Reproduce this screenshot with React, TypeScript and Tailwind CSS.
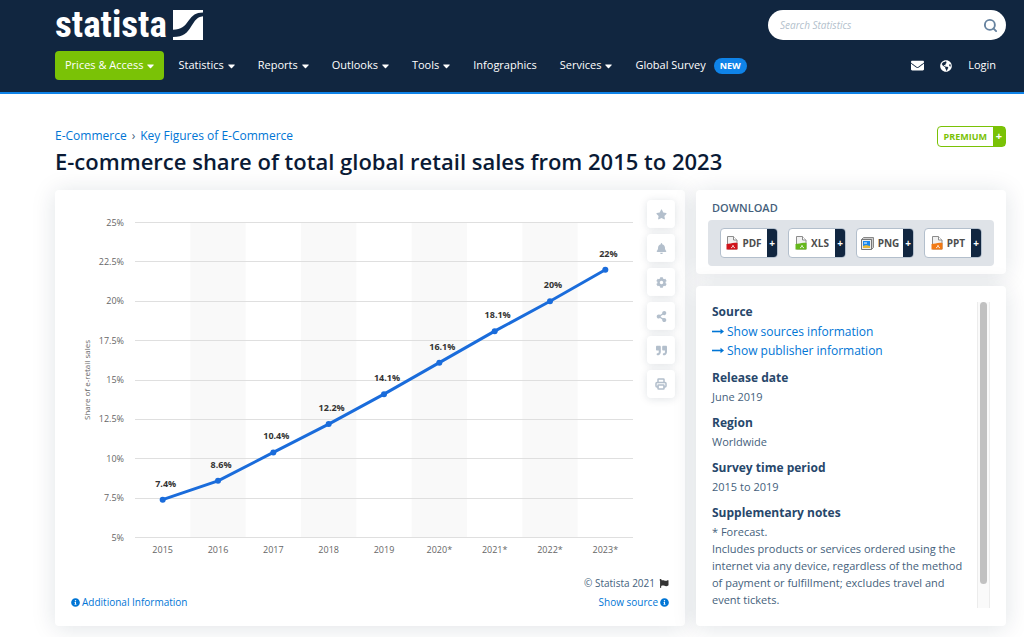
import React from 'react';
import {
  FaBell,
  FaCaretDown,
  FaCog,
  FaEnvelope,
  FaFlag,
  FaGlobeAmericas,
  FaInfoCircle,
  FaQuoteRight,
  FaShareAlt,
  FaStar,
} from 'react-icons/fa';
import { Printer, Search } from 'lucide-react';

const navItems = [
  { label: 'Statistics', caret: true },
  { label: 'Reports', caret: true },
  { label: 'Outlooks', caret: true },
  { label: 'Tools', caret: true },
  { label: 'Infographics', caret: false },
  { label: 'Services', caret: true },
];

const points = [
  { year: '2015', value: 7.4 },
  { year: '2016', value: 8.6 },
  { year: '2017', value: 10.4 },
  { year: '2018', value: 12.2 },
  { year: '2019', value: 14.1 },
  { year: '2020*', value: 16.1 },
  { year: '2021*', value: 18.1 },
  { year: '2022*', value: 20 },
  { year: '2023*', value: 22 },
];

const ticks = [25, 22.5, 20, 17.5, 15, 12.5, 10, 7.5, 5];

// plot area inside the chart's viewBox
const LEFT = 64;
const RIGHT = 562;
const TOP = 22.5;
const BOTTOM = 337.5;
const STEP = (RIGHT - LEFT) / points.length;

const xAt = (i: number) => LEFT + STEP * (i + 0.5);
const yAt = (v: number) => BOTTOM - ((v - 5) / 20) * (BOTTOM - TOP);

const Logo: React.FC = () => (
  <a href="#" className="flex items-center gap-[6px] text-white">
    <span className="font-['Liberation_Sans_Narrow','Roboto_Condensed','DejaVu_Sans_Condensed',sans-serif] text-[37px] font-bold leading-[30px]">
      statista
    </span>
    <svg className="h-[30px] w-[30px]" viewBox="0 0 88 88" fill="currentColor" aria-hidden="true">
      <path d="M0 0H88V7C66 7 58 15 46 31C34 48 24 58 0 58Z" />
      <path d="M0 79C32 79 42 67 54 47C64 31 70 20 88 18V88H0Z" />
    </svg>
  </a>
);

const Header: React.FC = () => (
  <header className="border-b-2 border-[#0f83e8] bg-[#112640] pt-[10px] pb-3 pl-[55px] pr-[18px] text-white">
    <div className="flex items-center justify-between">
      <Logo />
      <form className="flex h-[30px] w-[238px] items-center rounded-full bg-white pl-3 pr-2">
        <input
          type="search"
          aria-label="Search Statistics"
          placeholder="Search Statistics"
          className="min-w-0 flex-1 bg-transparent text-[10px] text-gray-700 outline-none placeholder:italic placeholder:text-[#b3bfcc]"
        />
        <button type="submit" aria-label="Search" className="text-[#66829f]">
          <Search size={15} strokeWidth={3} />
        </button>
      </form>
    </div>

    <div className="mt-[11px] flex items-center justify-between text-[11px]">
      <nav className="flex items-center gap-[23px]">
        <button className="-mr-[9px] flex h-[29px] items-center gap-1 rounded-sm bg-[#7ac206] px-[10px]">
          Prices &amp; Access <FaCaretDown className="h-3 w-[7px]" />
        </button>
        {navItems.map((item) => (
          <a key={item.label} href="#" className="flex items-center gap-1">
            {item.label}
            {item.caret && <FaCaretDown className="h-3 w-[7px]" />}
          </a>
        ))}
        <a href="#" className="flex items-center gap-2">
          Global Survey
          <span className="rounded-full bg-[#0f83e8] px-[6px] text-[9px] font-bold leading-4">NEW</span>
        </a>
      </nav>
      <div className="flex items-center gap-4 pr-[10px]">
        <a href="#" aria-label="Contact"><FaEnvelope className="h-[13px] w-[13px]" /></a>
        <a href="#" aria-label="Language"><FaGlobeAmericas className="h-3 w-3" /></a>
        <a href="#">Login</a>
      </div>
    </div>
  </header>
);

const LineChart: React.FC = () => (
  <svg className="min-w-0 flex-1" viewBox="0 0 568 370" role="img" aria-label="Share of e-retail sales by year">
    {points.map((p, i) =>
      i % 2 === 1 ? (
        <rect key={p.year} x={LEFT + STEP * i} y={TOP} width={STEP} height={BOTTOM - TOP} fill="#f9f9f9" />
      ) : null
    )}
    {ticks.map((t) => (
      <g key={t}>
        <line x1={LEFT} x2={RIGHT} y1={yAt(t)} y2={yAt(t)} stroke="#dfdfdf" strokeWidth="1" shapeRendering="crispEdges" />
        <text x="53" y={yAt(t) + 3} textAnchor="end" fontSize="9" fill="#666">{t}%</text>
      </g>
    ))}
    <text transform="translate(19 180) rotate(-90)" textAnchor="middle" fontSize="8" fill="#666">
      Share of e-retail sales
    </text>
    <polyline
      points={points.map((p, i) => `${xAt(i)},${yAt(p.value)}`).join(' ')}
      fill="none"
      stroke="#1a6cdb"
      strokeWidth="3"
      strokeLinejoin="round"
    />
    {points.map((p, i) => (
      <g key={p.year}>
        <circle cx={xAt(i)} cy={yAt(p.value)} r="3" fill="#1a6cdb" />
        <text x={xAt(i) + 3} y={yAt(p.value) - 13} textAnchor="middle" fontSize="9" fontWeight="700" fill="#333">
          {p.value}%
        </text>
        <text x={xAt(i)} y="353" textAnchor="middle" fontSize="9" fill="#666">{p.year}</text>
      </g>
    ))}
  </svg>
);

const tools = [
  { label: 'Favorite', icon: <FaStar /> },
  { label: 'Alert', icon: <FaBell /> },
  { label: 'Settings', icon: <FaCog /> },
  { label: 'Share', icon: <FaShareAlt /> },
  { label: 'Cite', icon: <FaQuoteRight /> },
  { label: 'Print', icon: <Printer size={12} strokeWidth={3} /> },
];

const ChartCard: React.FC = () => (
  <section className="flex min-w-0 flex-1 flex-col justify-between rounded bg-white pt-[10px] pr-[10px] pb-[14px] pl-4 shadow-[0_2px_24px_rgba(15,39,65,0.13)]">
    <div className="flex items-start gap-2">
      <LineChart />
      <div className="flex flex-col gap-[6px]">
        {tools.map((tool) => (
          <button
            key={tool.label}
            aria-label={tool.label}
            className="flex h-7 w-7 items-center justify-center rounded bg-white text-[11px] text-[#b3bfcc] shadow-[0_1px_8px_rgba(15,39,65,0.13)]"
          >
            {tool.icon}
          </button>
        ))}
      </div>
    </div>
    <div className="flex items-end justify-between pr-[6px] text-[10px] leading-[19px] text-[#0075d5]">
      <a href="#" className="flex items-center gap-[2px]">
        <FaInfoCircle className="h-[9px] w-[9px]" /> Additional Information
      </a>
      <div className="flex flex-col items-end">
        <span className="flex items-center gap-1 text-[#455f7c]">
          © Statista 2021 <FaFlag className="h-[9px] w-[10px] text-[#333]" />
        </span>
        <a href="#" className="flex items-center gap-[2px]">
          Show source <FaInfoCircle className="h-[9px] w-[9px]" />
        </a>
      </div>
    </div>
  </section>
);

// sheet of paper with a folded corner and a coloured lower half
const FileIcon: React.FC<{ color: string }> = ({ color }) => (
  <svg className="h-[14px] w-3" viewBox="0 0 12 14" aria-hidden="true">
    <path d="M1.500 .5H7.500L11 4V13H1.500Z" fill="#f1f1f1" stroke="#8c8c8c" />
    <path d="M7.500 .5V4H11" fill="#fff" stroke="#8c8c8c" />
    <path d="M.5 8C4 8 7 6 11.500 7V13.500H.5Z" fill={color} />
    <path d="M5 12L8 9.500M6 9.500L9 12" stroke="#fff" strokeWidth=".8" fill="none" />
  </svg>
);

const ImageIcon: React.FC = () => (
  <svg className="h-[13px] w-[13px]" viewBox="0 0 13 13" aria-hidden="true">
    <path d="M2.500 .5H12.500V10.500L10.500 12.500V2.500H.5Z" fill="#ccc" stroke="#888" />
    <path d="M.5 2.500H10.500V12.500H.5Z" fill="#eee" stroke="#777" />
    <path d="M2 4H9V11H2Z" fill="#1787ee" />
    <path d="M2 9L5 8L9 9V11H2Z" fill="#e8b83a" />
    <path d="M3 6H6" stroke="#fff" />
  </svg>
);

const ArrowIcon: React.FC = () => (
  <svg className="h-[7px] w-3" viewBox="0 0 12 7" aria-hidden="true">
    <path d="M0 3.500H9" stroke="currentColor" strokeWidth="1.600" />
    <path d="M8.500 .8L12 3.500L8.500 6.200Z" fill="currentColor" />
  </svg>
);

const formats = [
  { label: 'PDF', icon: <FileIcon color="#d0141c" /> },
  { label: 'XLS', icon: <FileIcon color="#66b81c" /> },
  { label: 'PNG', icon: <ImageIcon /> },
  { label: 'PPT', icon: <FileIcon color="#f17a16" /> },
];

const DownloadCard: React.FC = () => (
  <section className="rounded bg-white pt-[10px] pr-3 pb-2 pl-3 shadow-[0_2px_24px_rgba(15,39,65,0.13)]">
    <h2 className="pl-1 text-[11px] font-semibold leading-4 text-[#455f7c]">DOWNLOAD</h2>
    <div className="mt-1 flex justify-between rounded bg-[#dfe3e8] px-3 py-2">
      {formats.map((f) => (
        <button
          key={f.label}
          className="flex h-[30px] w-[58px] items-stretch overflow-hidden rounded-sm border border-[#b3bfcc] bg-white text-[10px] font-bold text-[#4d4d4d]"
        >
          <span className="flex flex-1 items-center justify-center gap-1">
            {f.icon}
            {f.label}
          </span>
          <span className="flex w-[10px] items-center justify-center bg-[#112640] text-white">+</span>
        </button>
      ))}
    </div>
  </section>
);

const details = [
  { title: 'Release date', text: 'June 2019' },
  { title: 'Region', text: 'Worldwide' },
  { title: 'Survey time period', text: '2015 to 2019' },
];

const InfoCard: React.FC = () => (
  <section className="flex rounded bg-white pt-4 pr-4 pb-[18px] pl-4 shadow-[0_2px_24px_rgba(15,39,65,0.13)]">
    <div className="flex-1 text-[11px] leading-[17px] text-[#455f7c]">
      <h3 className="text-[12px] font-bold leading-5 text-[#27476b]">Source</h3>
      {['Show sources information', 'Show publisher information'].map((label) => (
        <a key={label} href="#" className="flex items-center gap-[3px] text-[12px] leading-[19px] text-[#0075d5]">
          <ArrowIcon /> {label}
        </a>
      ))}
      {details.map((d) => (
        <div key={d.title} className="mt-2">
          <h3 className="text-[12px] font-bold leading-5 text-[#27476b]">{d.title}</h3>
          <p>{d.text}</p>
        </div>
      ))}
      <div className="mt-2">
        <h3 className="text-[12px] font-bold leading-5 text-[#27476b]">Supplementary notes</h3>
        <p>* Forecast.</p>
        <p>
          Includes products or services ordered using the internet via any device, regardless of the method of payment
          or fulfillment; excludes travel and event tickets.
        </p>
      </div>
    </div>
    {/* scrollbar */}
    <div className="ml-3 flex w-[13px] justify-center border-x border-[#ececec] bg-[#fafafa]">
      <div className="h-[92%] w-[7px] rounded-full bg-[#c1c1c1]" />
    </div>
  </section>
);

const App: React.FC = () => {
  return (
    <div className="bg-white font-['Open_Sans',sans-serif]">
      <Header />
      <main className="pt-8 pb-[11px] pl-[55px] pr-[18px]">
        <div className="flex items-start justify-between">
          <div>
            <nav aria-label="Breadcrumb" className="flex gap-[5px] text-[12px] leading-5 text-[#0075d5]">
              <a href="#">E-Commerce</a>
              <span className="text-[#455f7c]">›</span>
              <a href="#">Key Figures of E-Commerce</a>
            </nav>
            <h1 className="text-[22px] font-semibold leading-[30px] text-[#0a1a35]">
              E-commerce share of total global retail sales from 2015 to 2023
            </h1>
          </div>
          <div className="flex h-[21px] items-stretch rounded-sm border border-[#7ac206] text-[9px] font-bold text-[#7ac206]">
            <span className="flex items-center px-[6px]">PREMIUM</span>
            <span className="flex w-3 items-center justify-center bg-[#7ac206] text-[11px] text-white">+</span>
          </div>
        </div>

        <div className="mt-[14px] flex gap-[11px]">
          <ChartCard />
          <aside className="flex w-[310px] flex-col gap-3">
            <DownloadCard />
            <InfoCard />
          </aside>
        </div>
      </main>
    </div>
  );
};

export default App;
